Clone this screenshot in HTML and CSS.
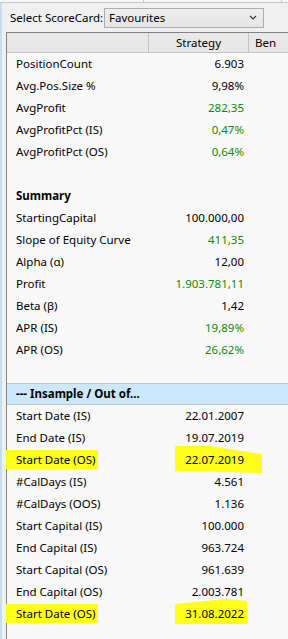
FILE: index.html
```html
<!DOCTYPE html>
<html lang="en">
<head>
  <meta charset="UTF-8">
  <title>ScoreCard</title>
  <link rel="stylesheet" href="styles.css">
</head>
<body>

  <div class="top-strip">
    <span class="split s1"></span>
    <span class="split s2"></span>
  </div>

  <div class="frame">
    <div class="toolbar">
      <span class="caption">Select ScoreCard:</span>
      <div class="combo">
        <span>Favourites</span>
        <svg class="chev" width="8" height="5" viewBox="0 0 8 5"><path d="M1 1 L4 4 L7 1" fill="none" stroke="#333" stroke-width="1.1"/></svg>
      </div>
    </div>

    <div class="grid">
      <div class="head">
        <div class="c-name"></div>
        <div class="c-val">Strategy</div>
        <div class="c-bench">Ben</div>
      </div>

      <div class="row"><div class="c-name">PositionCount</div><div class="c-val">6.903</div></div>
      <div class="row"><div class="c-name">Avg.Pos.Size %</div><div class="c-val">9,98%</div></div>
      <div class="row"><div class="c-name">AvgProfit</div><div class="c-val green">282,35</div></div>
      <div class="row"><div class="c-name">AvgProfitPct (IS)</div><div class="c-val green">0,47%</div></div>
      <div class="row"><div class="c-name">AvgProfitPct (OS)</div><div class="c-val green">0,64%</div></div>
      <div class="row"></div>

      <div class="row"><div class="c-name bold">Summary</div></div>
      <div class="row"><div class="c-name">StartingCapital</div><div class="c-val">100.000,00</div></div>
      <div class="row"><div class="c-name">Slope of Equity Curve</div><div class="c-val green">411,35</div></div>
      <div class="row"><div class="c-name">Alpha (α)</div><div class="c-val">12,00</div></div>
      <div class="row"><div class="c-name">Profit</div><div class="c-val green">1.903.781,11</div></div>
      <div class="row"><div class="c-name">Beta (β)</div><div class="c-val">1,42</div></div>
      <div class="row"><div class="c-name">APR (IS)</div><div class="c-val green">19,89%</div></div>
      <div class="row"><div class="c-name">APR (OS)</div><div class="c-val green">26,62%</div></div>
      <div class="row"></div>

      <div class="row band"><div class="c-name bold">--- Insample / Out of...</div></div>
      <div class="row"><div class="c-name">Start Date (IS)</div><div class="c-val">22.01.2007</div></div>
      <div class="row"><div class="c-name">End Date (IS)</div><div class="c-val">19.07.2019</div></div>
      <div class="row">
        <div class="c-name"><span class="mark mark-label">Start Date (OS)</span></div>
        <div class="c-val"><span class="mark mark-val1">22.07.2019</span></div>
      </div>
      <div class="row"><div class="c-name">#CalDays (IS)</div><div class="c-val">4.561</div></div>
      <div class="row"><div class="c-name">#CalDays (OOS)</div><div class="c-val">1.136</div></div>
      <div class="row"><div class="c-name">Start Capital (IS)</div><div class="c-val">100.000</div></div>
      <div class="row"><div class="c-name">End Capital (IS)</div><div class="c-val">963.724</div></div>
      <div class="row"><div class="c-name">Start Capital (OS)</div><div class="c-val">961.639</div></div>
      <div class="row"><div class="c-name">End Capital (OS)</div><div class="c-val">2.003.781</div></div>
      <div class="row">
        <div class="c-name"><span class="mark mark-label">Start Date (OS)</span></div>
        <div class="c-val"><span class="mark mark-val2">31.08.2022</span></div>
      </div>
    </div>
  </div>

</body>
</html>
```

FILE: styles.css
```css
body {
  margin: 0;
  background-color: #f0f0f0;
  font-family: "Noto Sans", "Open Sans", sans-serif;
  font-size: 11.5px;
  color: #000;
  overflow: hidden;
}

.top-strip {
  position: relative;
  height: 2px;
  border-bottom: 1px solid #c8c8c8;
  background: #f6f6f6;
}

.split {
  position: absolute;
  top: 0;
  width: 1px;
  height: 2px;
  background: #c8c8c8;
}
.s1 { left: 143px; }
.s2 { left: 281px; }

.frame {
  border-left: 2px solid #c9ddf0;
  padding-left: 4px;
  height: 636px;
}

.toolbar {
  display: flex;
  align-items: center;
  height: 29px;
  padding-left: 4px;
}

.caption {
  flex-shrink: 0;
  width: 94px;
  white-space: nowrap;
}

.combo {
  display: flex;
  align-items: center;
  justify-content: space-between;
  flex-shrink: 0;
  box-sizing: border-box;
  width: 160px;
  height: 20px;
  border: 1px solid #acacac;
  background: linear-gradient(#efefef, #e5e5e5);
  padding: 0 6px 0 4px;
}

.grid {
  border-top: 1px solid #828282;
  border-left: 1px solid #828282;
  background: #f9f9f9;
  height: 610px;
}

.head {
  display: flex;
  height: 19px;
  background: #e8e8e8;
  border-bottom: 1px solid #c4c4c4;
  line-height: 19px;
}

.head .c-name,
.head .c-val {
  border-right: 1px solid #c4c4c4;
}

.head .c-val {
  text-align: center;
  padding-right: 0;
}

.c-bench {
  padding-left: 6px;
  white-space: nowrap;
}

.row {
  display: flex;
  height: 22px;
  line-height: 22px;
}

.c-name {
  box-sizing: border-box;
  width: 142px;
  padding-left: 9px;
  white-space: nowrap;
}

.c-val {
  box-sizing: border-box;
  width: 100px;
  text-align: right;
  padding-right: 5px;
  white-space: nowrap;
}

.green {
  color: #118811;
}

.bold {
  font-weight: bold;
}

.band {
  box-sizing: border-box;
  background: #cce8ff;
  border-top: 1px solid #c4c4c4;
  border-bottom: 1px solid #c4c4c4;
  line-height: 20px;
}

.mark {
  background: #ffff1a;
}

.mark-label {
  margin-left: -10px;
  padding: 2px 3px 2px 10px;
}

.mark-val1 {
  margin-right: -18px;
  padding: 6px 18px 6px 10px;
  clip-path: polygon(0 0, 40% 0, 100% 30%, 100% 100%, 0 92%);
}

.mark-val2 {
  margin-right: -3px;
  padding: 7px 3px 3px 10px;
  clip-path: polygon(0 20%, 70% 0, 100% 8%, 100% 100%, 0 100%);
}
```
